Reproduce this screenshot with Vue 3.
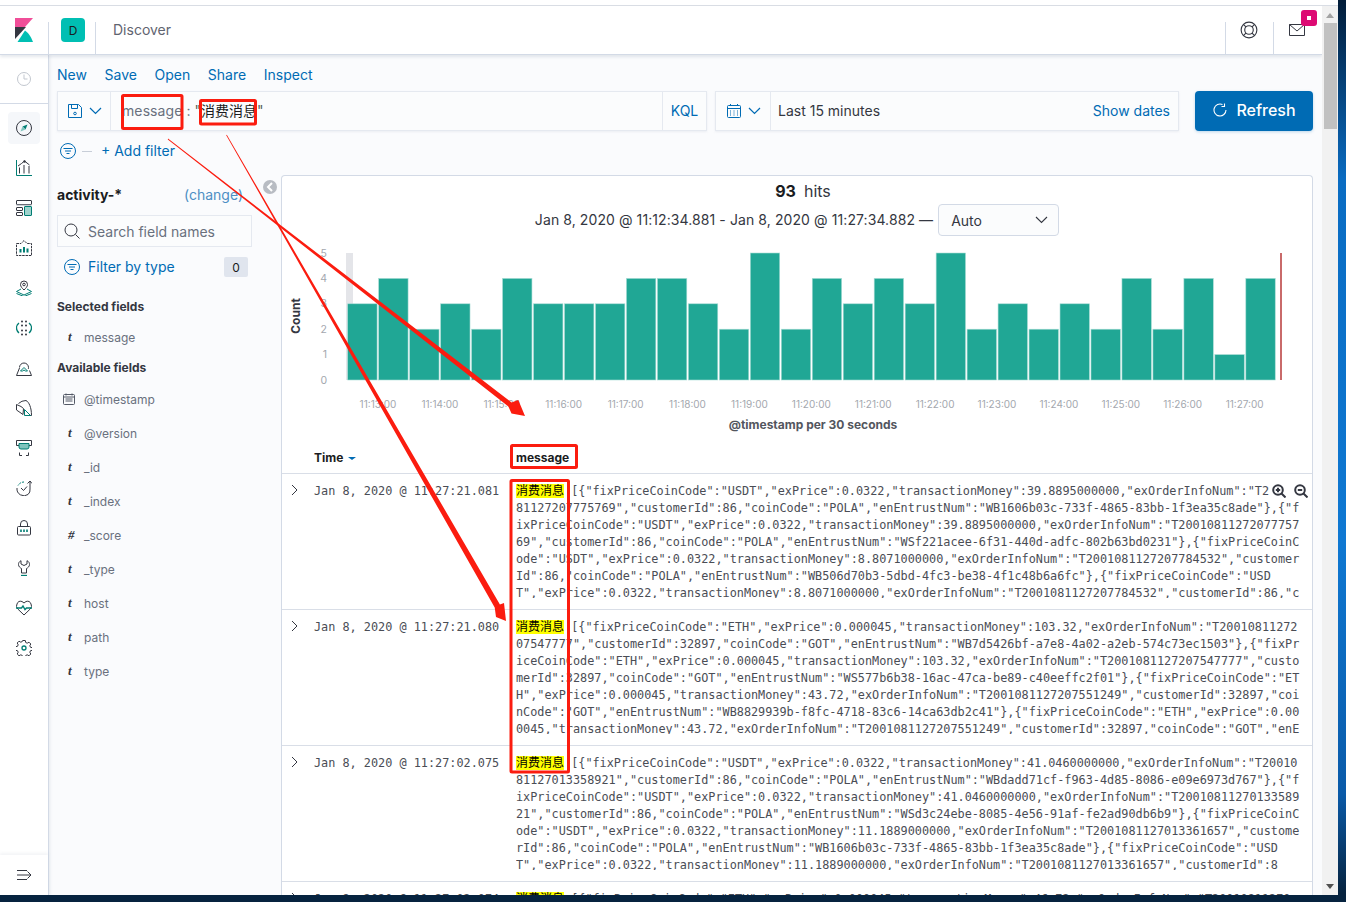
<script setup>
const bars = [3,4,2,3,2,4,3,3,3,4,4,3,2,5,2,4,3,4,3,5,2,3,2,3,2,4,2,4,1,4].map((v, i) => ({
  x: 347.7 + 30.97 * i,
  y: 380 - v * 25.4,
  h: v * 25.4
}))
const yTicks = [0, 1, 2, 3, 4, 5].map(v => ({ v, y: 383.5 - v * 25.4 }))
const xTicks = ['11:13:00','11:14:00','11:15:00','11:16:00','11:17:00','11:18:00','11:19:00','11:20:00','11:21:00','11:22:00','11:23:00','11:24:00','11:25:00','11:26:00','11:27:00']
  .map((t, i) => ({ t, x: 378 + 61.9 * i }))
const navLinks = ['New', 'Save', 'Open', 'Share', 'Inspect']
const fields = [
  { t: 'cal', n: '@timestamp' }, { t: 't', n: '@version' }, { t: 't', n: '_id' },
  { t: 't', n: '_index' }, { t: '#', n: '_score' }, { t: 't', n: '_type' },
  { t: 't', n: 'host' }, { t: 't', n: 'path' }, { t: 't', n: 'type' }
]
const rows = [
  { time: 'Jan 8, 2020 @ 11:27:21.081', hover: true, text: ' [{"fixPriceCoinCode":"USDT","exPrice":0.0322,"transactionMoney":39.8895000000,"exOrderInfoNum":"T2\n81127207775769","customerId":86,"coinCode":"POLA","enEntrustNum":"WB1606b03c-733f-4865-83bb-1f3ea35c8ade"},{"f\nixPriceCoinCode":"USDT","exPrice":0.0322,"transactionMoney":39.8895000000,"exOrderInfoNum":"T20010811272077757\n69","customerId":86,"coinCode":"POLA","enEntrustNum":"WSf221acee-6f31-440d-adfc-802b63bd0231"},{"fixPriceCoinC\node":"USDT","exPrice":0.0322,"transactionMoney":8.8071000000,"exOrderInfoNum":"T2001081127207784532","customer\nId":86,"coinCode":"POLA","enEntrustNum":"WB506d70b3-5dbd-4fc3-be38-4f1c48b6a6fc"},{"fixPriceCoinCode":"USD\nT","exPrice":0.0322,"transactionMoney":8.8071000000,"exOrderInfoNum":"T2001081127207784532","customerId":86,"c' },
  { time: 'Jan 8, 2020 @ 11:27:21.080', text: ' [{"fixPriceCoinCode":"ETH","exPrice":0.000045,"transactionMoney":103.32,"exOrderInfoNum":"T20010811272\n07547777","customerId":32897,"coinCode":"GOT","enEntrustNum":"WB7d5426bf-a7e8-4a02-a2eb-574c73ec1503"},{"fixPr\niceCoinCode":"ETH","exPrice":0.000045,"transactionMoney":103.32,"exOrderInfoNum":"T2001081127207547777","custo\nmerId":32897,"coinCode":"GOT","enEntrustNum":"WS577b6b38-16ac-47ca-be89-c40eeffc2f01"},{"fixPriceCoinCode":"ET\nH","exPrice":0.000045,"transactionMoney":43.72,"exOrderInfoNum":"T2001081127207551249","customerId":32897,"coi\nnCode":"GOT","enEntrustNum":"WB8829939b-f8fc-4718-83c6-14ca63db2c41"},{"fixPriceCoinCode":"ETH","exPrice":0.00\n0045,"transactionMoney":43.72,"exOrderInfoNum":"T2001081127207551249","customerId":32897,"coinCode":"GOT","enE' },
  { time: 'Jan 8, 2020 @ 11:27:02.075', text: ' [{"fixPriceCoinCode":"USDT","exPrice":0.0322,"transactionMoney":41.0460000000,"exOrderInfoNum":"T20010\n81127013358921","customerId":86,"coinCode":"POLA","enEntrustNum":"WBdadd71cf-f963-4d85-8086-e09e6973d767"},{"f\nixPriceCoinCode":"USDT","exPrice":0.0322,"transactionMoney":41.0460000000,"exOrderInfoNum":"T20010811270133589\n21","customerId":86,"coinCode":"POLA","enEntrustNum":"WSd3c24ebe-8085-4e56-91af-fe2ad90db6b9"},{"fixPriceCoinC\node":"USDT","exPrice":0.0322,"transactionMoney":11.1889000000,"exOrderInfoNum":"T2001081127013361657","custome\nrId":86,"coinCode":"POLA","enEntrustNum":"WB1606b03c-733f-4865-83bb-1f3ea35c8ade"},{"fixPriceCoinCode":"USD\nT","exPrice":0.0322,"transactionMoney":11.1889000000,"exOrderInfoNum":"T2001081127013361657","customerId":8' },
  { time: 'Jan 8, 2020 @ 11:27:02.074', text: ' [{"fixPriceCoinCode":"ETH","exPrice":0.000045,"transactionMoney":46.72,"exOrderInfoNum":"T20010811270' }
]
</script>

<template>
  <div class="desk">
    <div class="win">
      <div class="strip"></div>
      <div class="body">
        <div class="page">
          <header class="head">
            <div class="logo">
              <svg width="18" height="24" viewBox="0 0 18 24"><path d="M0 0H18L10 9H0Z" fill="#f04e98"/><path d="M0 9H11L0 21Z" fill="#343741"/><path d="M2.500 24L10 12.500Q15.500 16.500 18 24Z" fill="#00bfb3"/></svg>
            </div>
            <div class="space"><span class="avatar">D</span></div>
            <div class="crumb">Discover</div>
            <div class="hbtn">
              <svg width="18" height="18" viewBox="0 0 16 16" fill="none" stroke="#343741"><circle cx="8" cy="8" r="7"/><circle cx="8" cy="8" r="3.800"/><path d="M3 3l2.300 2.300M13 3l-2.300 2.300M3 13l2.300-2.300M13 13l-2.300-2.300"/></svg>
            </div>
            <div class="hbtn">
              <svg width="16" height="12" viewBox="0 0 16 12" fill="none" stroke="#343741"><path d="M.5.5h15v11H.5zM.5.5L8 7l7.500-6.500"/></svg>
              <span class="badge"><i></i></span>
            </div>
          </header>
          <div class="under">
            <nav class="rail">
              <div class="recent">
                <svg width="16" height="16" viewBox="0 0 16 16" fill="none" stroke="#c2c7cf"><circle cx="8" cy="8" r="6.500"/><path d="M8 3.500V8h3.500"/></svg>
              </div>
              <div class="apps">
                <div class="app on"><svg width="16" height="16" viewBox="0 0 16 16" fill="none" stroke="#343741"><circle cx="8" cy="8" r="7.500"/><path d="M11.500 4.500L9.500 9.500 6.500 6.500z" fill="#017d73" stroke="none"/><path d="M4.500 11.500L9.500 9.500 6.500 6.500z" fill="#7fc4bd" stroke="none"/></svg></div>
                <div class="app"><svg width="16" height="16" viewBox="0 0 16 16" fill="none"><path d="M.5 0v15.500H16" stroke="#017d73"/><path d="M3.500 13.500V7.500M8 13.500V5M13 13.500V6" stroke="#343741"/><path d="M2 6l3.500-2.500L8.500 1l5 4" stroke="#343741"/><circle cx="8.500" cy="1.500" r="1.200" fill="#343741"/></svg></div>
                <div class="app"><svg width="16" height="16" viewBox="0 0 16 16" fill="none" stroke="#343741"><rect x=".5" y=".5" width="15" height="4" rx=".5"/><path d="M.5 5h15" stroke="#9aa0aa"/><rect x=".5" y="7.500" width="6" height="3" rx=".5"/><rect x=".5" y="12.500" width="6" height="3" rx=".5"/><rect x="8.500" y="6.500" width="7" height="9" rx=".5" stroke="#017d73" fill="#9fd3cd"/></svg></div>
                <div class="app"><svg width="16" height="16" viewBox="0 0 16 16" fill="none" stroke="#343741"><path d="M.5 3.500H5L8 .5l3 3h4.500v12H.5z" stroke-dasharray="2.500 .8"/><path d="M4.500 12.500V9M8 12.500V7M11.500 12.500V8.500" stroke="#017d73" stroke-width="2"/></svg></div>
                <div class="app"><svg width="16" height="16" viewBox="0 0 16 16" fill="none" stroke="#343741"><path d="M8 10C6 8 4.500 6.500 4.500 4.500a3.500 3.500 0 017 0C11.500 6.500 10 8 8 10z"/><circle cx="8" cy="4.500" r="1.300"/><path d="M5 9L.5 11.500 8 15l7.500-3.500L11 9M.5 13.500L8 16.500l7.500-3" stroke="#017d73"/></svg></div>
                <div class="app"><svg width="16" height="16" viewBox="0 0 16 16" fill="#343741"><circle cx="6" cy="1.500" r="1"/><circle cx="10" cy="1.500" r="1"/><circle cx="6" cy="5.500" r="1"/><circle cx="10" cy="5.500" r="1"/><circle cx="6" cy="10.500" r="1"/><circle cx="10" cy="10.500" r="1"/><circle cx="6" cy="14.500" r="1"/><circle cx="10" cy="14.500" r="1"/><path d="M3 3Q.5 5 .5 8T3 13M13 3q2.500 2 2.500 5T13 13" fill="none" stroke="#017d73" stroke-width="1.300"/></svg></div>
                <div class="app"><svg width="16" height="16" viewBox="0 0 16 16" fill="none" stroke="#343741"><path d="M3.500 7.500a4.500 4.500 0 119 0c0 .5 0 1-.2 1.500"/><path d="M3.500 8L.5 15.500h15l-2-5"/><path d="M4.500 11L8 7.500l3.500 3.500H9.500L8 10l-1.500 1z" stroke="#017d73"/></svg></div>
                <div class="app"><svg width="16" height="16" viewBox="0 0 16 16" fill="none" stroke="#343741"><path d="M7 14.500L.5 10V4.500L5 6.500l2.500 2zM2.500 3.500A11 11 0 0110 .5c3 1.500 5.500 7 5.500 15H9.500"/><path d="M8.500 15.500V9.500l6 6z" stroke="#017d73"/></svg></div>
                <div class="app"><svg width="16" height="16" viewBox="0 0 16 16" fill="none" stroke="#343741"><path d="M3 5.500H.5V.5h15v5H13"/><path d="M3 3.500h10V7a2 2 0 01-2 2H5a2 2 0 01-2-2z" fill="#7fc4bd" stroke="#017d73"/><path d="M6 15.500H3.500v-3M10 15.500h2.500v-3"/></svg></div>
                <div class="app"><svg width="16" height="16" viewBox="0 0 16 16" fill="none" stroke="#343741"><path d="M8 2a7 7 0 00-6 3.500" stroke="#017d73" stroke-dasharray="2 1"/><path d="M1 8a7 7 0 0011 6.500A6 6 0 0014 9V1M11.500 3.500L14 1l2 2.500"/><path d="M5 8l2.500 2.500L11 6.500"/></svg></div>
                <div class="app"><svg width="16" height="16" viewBox="0 0 16 16" fill="none" stroke="#343741"><path d="M4.500 6V4a3.500 3.500 0 017 0v2"/><rect x="1.500" y="6.500" width="13" height="8.500" rx="1"/><path d="M5 9.500v2.500M8 9.500v2.500M11 9.500v2.500" stroke="#017d73" stroke-width="1.600"/></svg></div>
                <div class="app"><svg width="16" height="16" viewBox="0 0 16 16" fill="none" stroke="#343741"><path d="M5 .7C3 1.700 2.500 3 2.500 4.500 2.500 6.500 4 7.700 5.500 8.500v4.500h5V8.500C12 7.700 13.500 6.500 13.500 4.500 13.500 3 13 1.700 11 .7V4L8 5.500 5 4z"/><path d="M5 15.500h6" stroke="#017d73" stroke-width="1.300"/></svg></div>
                <div class="app"><svg width="16" height="16" viewBox="0 0 16 16" fill="none" stroke="#343741"><path d="M8 15L1.800 9A4 4 0 011 4a4 4 0 015-2.500L8 3l2-1.500A4 4 0 0115 4a4 4 0 01-.8 5z"/><path d="M0 8h5.500l1.500-2 2 3.500 1.500-1.500H16" stroke="#017d73" stroke-width="1.400"/></svg></div>
                <div class="app"><svg width="16" height="16" viewBox="0 0 16 16" fill="none" stroke="#343741"><path d="M6.700.5h2.600l.4 2 1.500.7 1.800-1 1.800 1.800-1 1.800.7 1.500 2 .4v2.600l-2 .4-.7 1.500 1 1.800-1.800 1.800-1.800-1-1.500.7-.4 2H6.700l-.4-2-1.500-.7-1.800 1-1.800-1.800 1-1.800-.7-1.500-2-.4V6.700l2-.4.7-1.500-1-1.800 1.800-1.800 1.800 1 1.500-.7z"/><circle cx="8" cy="8" r="2" stroke="#017d73" stroke-width="1.300"/></svg></div>
              </div>
              <div class="toggle">
                <svg width="16" height="12" viewBox="0 0 16 12" fill="none" stroke="#343741"><path d="M1 1.500h10M1 6h14M1 10.500h10M11.500 2.500L15 6l-3.500 3.500"/></svg>
              </div>
            </nav>
            <main class="main">
              <div class="links"><a v-for="l in navLinks" :key="l">{{ l }}</a></div>
              <div class="bars">
                <div class="query">
                  <div class="qsave">
                    <svg width="14" height="14" viewBox="0 0 14 14" fill="none" stroke="#006bb4"><path d="M.5.5h10l3 3v10H.5zM3.500.5v4h6v-4"/><circle cx="7" cy="9.500" r="1.300"/></svg>
                    <svg width="13" height="8" viewBox="0 0 13 8" fill="none" stroke="#006bb4" stroke-width="1.200"><path d="M1 1l5.500 5.500L12 1"/></svg>
                  </div>
                  <div class="qinput"><span class="qk">message</span><span class="qp"> : </span><span class="qq">"</span><span class="qv">消费消息</span><span class="qq">"</span></div>
                  <div class="kql">KQL</div>
                </div>
                <div class="date">
                  <div class="dcal">
                    <svg width="16" height="16" viewBox="0 0 16 16" fill="none" stroke="#006bb4"><rect x="1.500" y="2.500" width="13" height="12" rx="1"/><path d="M1.500 5.500h13M4.500 1v2M11.500 1v2M4 8h1M7.500 8h1M11 8h1M4 10h1M7.500 10h1M11 10h1M4 12h1M7.500 12h1M11 12h1"/></svg>
                    <svg width="13" height="8" viewBox="0 0 13 8" fill="none" stroke="#006bb4" stroke-width="1.200"><path d="M1 1l5.500 5.500L12 1"/></svg>
                  </div>
                  <div class="dtext">Last 15 minutes</div>
                  <div class="dshow">Show dates</div>
                </div>
                <button class="refresh">
                  <svg width="14" height="14" viewBox="0 0 14 14" fill="none" stroke="#fff" stroke-width="1.100"><path d="M9.500 1.500A6 6 0 1013 7M11.500.5v3h-3"/></svg>
                  Refresh
                </button>
              </div>
              <div class="filters">
                <svg width="16" height="16" viewBox="0 0 16 16" fill="none" stroke="#006bb4"><circle cx="8" cy="8" r="7.500"/><path d="M3.500 5.500h9M5 8h6M6.500 10.500h3"/></svg>
                <span class="dash"></span>
                <a class="add">+ Add filter</a>
              </div>
              <div class="content">
                <aside class="side">
                  <div class="idx"><b>activity-*</b><a>(change)</a></div>
                  <div class="search">
                    <svg width="16" height="16" viewBox="0 0 16 16" fill="none" stroke="#343741"><circle cx="7" cy="7" r="6"/><path d="M11.500 11.500L15.500 15.500"/></svg>
                    <span>Search field names</span>
                  </div>
                  <div class="ftype">
                    <svg width="16" height="16" viewBox="0 0 16 16" fill="none" stroke="#006bb4"><circle cx="8" cy="8" r="7.500"/><path d="M3.500 5.500h9M5 8h6M6.500 10.500h3"/></svg>
                    <span>Filter by type</span>
                    <em>0</em>
                  </div>
                  <h3 class="sel">Selected fields</h3>
                  <div class="field first"><span class="ti">t</span><span>message</span></div>
                  <h3 class="avail">Available fields</h3>
                  <div v-for="f in fields" :key="f.n" class="field">
                    <svg v-if="f.t === 'cal'" class="calic" width="12" height="12" viewBox="0 0 12 12" fill="none" stroke="#535966"><rect x=".5" y="1.500" width="11" height="10" rx="1"/><path d="M.5 4h11M3 .5v2M9 .5v2M2.500 6h7M2.500 8h7" /></svg>
                    <span v-else class="ti">{{ f.t }}</span>
                    <span>{{ f.n }}</span>
                  </div>
                  <span class="collapse">
                    <svg width="8" height="10" viewBox="0 0 8 10" fill="none" stroke="#fff" stroke-width="2"><path d="M6 1L2 5l4 4"/></svg>
                  </span>
                </aside>
                <section class="card">
                  <div class="hits"><b>93</b><span>hits</span></div>
                  <div class="range">
                    <span class="rtext">Jan 8, 2020 @ 11:12:34.881 - Jan 8, 2020 @ 11:27:34.882 —</span>
                    <div class="auto">
                      <span>Auto</span>
                      <svg width="13" height="8" viewBox="0 0 13 8" fill="none" stroke="#343741" stroke-width="1.100"><path d="M1 1l5.500 5.500L12 1"/></svg>
                    </div>
                  </div>
                  <svg class="chart" width="1030" height="203" viewBox="282 240 1030 203">
                    <rect x="346" y="253" width="7" height="127" fill="#e4e5e9"/>
                    <rect v-for="(b, i) in bars" :key="i" :x="b.x" :y="b.y" width="29.400" :height="b.h" fill="#20a795" stroke="#a9dcd5" stroke-width=".6"/>
                    <rect x="1280" y="253" width="2" height="127" fill="#c96a6a"/>
                    <text v-for="t in yTicks" :key="t.v" :x="327" :y="t.y" class="ty" text-anchor="end">{{ t.v }}</text>
                    <text v-for="t in xTicks" :key="t.t" :x="t.x" y="408" class="tx" text-anchor="middle">{{ t.t }}</text>
                    <text class="at" transform="translate(300 316) rotate(-90)" text-anchor="middle">Count</text>
                    <text class="at2" x="813" y="429" text-anchor="middle">@timestamp per 30 seconds</text>
                  </svg>
                  <div class="thead">
                    <span class="tht">Time<i></i></span>
                    <span class="thm">message</span>
                  </div>
                  <div v-for="r in rows" :key="r.time" class="row">
                    <svg class="chev" width="7" height="12" viewBox="0 0 7 12" fill="none" stroke="#343741"><path d="M1 1l5 5-5 5"/></svg>
                    <div class="time">{{ r.time }}</div>
                    <div class="src"><mark>消费消息</mark>{{ r.text }}</div>
                    <div v-if="r.hover" class="zoomers">
                      <svg width="14" height="14" viewBox="0 0 14 14" fill="none" stroke="#343741" stroke-width="2"><circle cx="6" cy="6" r="4.800"/><path d="M9.500 9.500l4 4M3.800 6h4.400M6 3.800v4.400" /></svg>
                      <svg width="14" height="14" viewBox="0 0 14 14" fill="none" stroke="#343741" stroke-width="2"><circle cx="6" cy="6" r="4.800"/><path d="M9.500 9.500l4 4M3.800 6h4.400"/></svg>
                    </div>
                  </div>
                </section>
              </div>
            </main>
          </div>
        </div>
        <div class="scroll">
          <span class="up"></span>
          <span class="thumb"></span>
          <span class="down"></span>
        </div>
      </div>
    </div>
    <svg class="marks" width="1346" height="902" viewBox="0 0 1346 902">
      <g fill="none" stroke="#fb1c0f" stroke-width="3">
        <rect x="122.500" y="95.500" width="59.500" height="33" rx="1"/>
        <rect x="200.500" y="100.500" width="55" height="23.500" rx="1"/>
        <rect x="511.500" y="445.500" width="65" height="22" rx="1"/>
        <rect x="511" y="480.500" width="57.500" height="291.500" rx="1"/>
      </g>
      <g fill="#fb1c0f">
        <polygon points="168,138.600 167.800,139.400 508.400,406.500 511.500,413.500 525,416 518.300,400 511.600,402.400"/>
        <polygon points="226.200,135.200 226.800,134.800 499.900,604.500 504,603 506,621 496,617 494.700,607.500"/>
      </g>
    </svg>
  </div>
</template>

<style>
html, body { margin: 0; padding: 0; overflow: hidden; }
</style>

<style scoped>
.desk { position: relative; width: 1346px; height: 902px; overflow: hidden; background: linear-gradient(180deg, #021c38 0, #0a6cc2 20%, #0f78d2 60%, #0a5aa8 88%, #06233f 99%); font-family: Inter, "Noto Sans CJK SC", sans-serif; font-size: 14px; color: #343741; }
.win { width: 1338px; height: 895px; display: flex; flex-direction: column; overflow: hidden; background: #fff; }
.strip { height: 6px; flex: none; box-sizing: border-box; background: #fff; border-bottom: 1px solid #d9dde4; }
.body { flex: 1; min-height: 0; display: flex; }
.page { flex: 1; min-width: 0; display: flex; flex-direction: column; overflow: hidden; }
.scroll { width: 16px; flex: none; background: #f1f1f1; display: flex; flex-direction: column; align-items: center; }
.up { margin-top: 7px; border: 4px solid transparent; border-top: 0; border-bottom: 5px solid #a3a3a3; }
.thumb { margin-top: 5px; width: 13px; height: 106px; background: #c1c1c1; }
.down { margin-top: auto; margin-bottom: 6px; border: 4px solid transparent; border-bottom: 0; border-top: 5px solid #505050; }

.head { height: 49px; flex: none; display: flex; align-items: stretch; background: #fff; border-bottom: 1px solid #d3dae6; box-shadow: 0 2px 3px rgba(152,162,179,.25); position: relative; z-index: 2; box-sizing: border-box; }
.logo { width: 48px; flex: none; display: flex; align-items: center; justify-content: center; position: relative; }
.logo::after { content: ""; position: absolute; right: -1px; top: 16px; bottom: 0; width: 1px; background: #d3dae6; }
.space { width: 48px; flex: none; display: flex; align-items: center; justify-content: center; position: relative; padding-left: 2px; box-sizing: border-box; }
.space::after { content: ""; position: absolute; right: 0; top: 16px; bottom: 0; width: 1px; background: #d3dae6; }
.avatar { width: 24px; height: 24px; border-radius: 4px; background: #00bfb3; color: #1a1c21; font-size: 12px; display: flex; align-items: center; justify-content: center; }
.crumb { flex: 1; padding: 0 0 2px 17px; display: flex; align-items: center; color: #5f6470; }
.hbtn { width: 48px; flex: none; display: flex; align-items: center; justify-content: center; position: relative; }
.hbtn::before { content: ""; position: absolute; left: 0; top: 16px; bottom: 0; width: 1px; background: #d3dae6; }
.hbtn:last-of-type { margin-right: 1px; }
.badge { position: absolute; left: 28px; top: 4px; width: 16px; height: 16px; border-radius: 3px; background: #dd0a73; display: flex; align-items: center; justify-content: center; }
.badge i { width: 4px; height: 4px; background: #fff; }

.under { flex: 1; min-height: 0; display: flex; }
.rail { width: 48px; flex: none; background: #fff; border-right: 1px solid #d3dae6; box-shadow: 1px 0 3px rgba(152,162,179,.2); display: flex; flex-direction: column; position: relative; z-index: 1; }
.recent { height: 49px; box-sizing: border-box; flex: none; display: flex; align-items: center; justify-content: center; border-bottom: 1px solid #d3dae6; padding-bottom: 1px; }
.apps { flex: 1; padding-top: 8px; display: flex; flex-direction: column; align-items: center; }
.app { width: 32px; height: 32px; margin-bottom: 8px; border-radius: 4px; display: flex; align-items: center; justify-content: center; }
.app.on { background: #f5f7fa; }
.toggle { height: 40px; flex: none; display: flex; align-items: center; justify-content: center; box-shadow: 0 -2px 3px rgba(152,162,179,.12); }

.main { flex: 1; min-width: 0; background: #fafbfd; padding: 0 9px 0 8px; display: flex; flex-direction: column; }
.links { height: 36px; flex: none; display: flex; align-items: center; gap: 17.600px; padding-top: 4px; padding-bottom: 1px; box-sizing: border-box; color: #006bb4; }
.bars { height: 40px; flex: none; display: flex; gap: 8px; }
.query { width: 650px; box-sizing: border-box; flex: none; display: flex; background: #fbfcfd; border: 1px solid #e5e9f0; box-shadow: 0 1px 2px rgba(152,162,179,.15); }
.qsave { width: 53px; box-sizing: border-box; flex: none; display: flex; align-items: center; justify-content: center; gap: 7px; border-right: 1px solid #e5e9f0; padding-left: 1px; }
.qinput { flex: 1; padding-left: 11px; line-height: 38px; white-space: pre; }
.qk { color: #69707d; letter-spacing: .1px; }
.qp { color: #69707d; }
.qq { color: #55605a; }
.qv { color: #1a1c21; }
.kql { width: 44px; box-sizing: border-box; flex: none; border-left: 1px solid #e5e9f0; display: flex; align-items: center; justify-content: center; color: #006bb4; padding-bottom: 1px; }
.date { width: 464px; box-sizing: border-box; flex: none; display: flex; align-items: center; background: #fbfcfd; border: 1px solid #e5e9f0; box-shadow: 0 1px 2px rgba(152,162,179,.15); }
.dcal { width: 55px; height: 100%; box-sizing: border-box; flex: none; display: flex; align-items: center; justify-content: center; gap: 6px; border-right: 1px solid #e5e9f0; }
.dtext { flex: 1; padding-left: 7px; padding-bottom: 2px; color: #343741; }
.dshow { padding-right: 8px; padding-bottom: 2px; color: #006bb4; }
.refresh { width: 118px; margin-left: 8px; flex: none; border: 0; border-radius: 4px; background: #006bb4; color: #fff; font: 500 16px Inter, sans-serif; display: flex; align-items: center; justify-content: center; gap: 9px; padding: 0 0 2px 1px; box-shadow: 0 1px 3px rgba(0,107,180,.25); }
.filters { height: 40px; margin-bottom: 4px; flex: none; display: flex; align-items: center; padding-left: 3px; }
.dash { width: 10px; height: 1px; background: #c8ced8; margin-left: 6px; }
.add { margin-left: 9px; color: #006bb4; padding-bottom: 2px; }

.content { flex: 1; min-height: 0; display: flex; }
.side { width: 195px; flex: none; margin-right: 29px; position: relative; }
.idx { height: 20px; margin-top: 9px; margin-bottom: 1px; display: flex; align-items: center; justify-content: space-between; }
.idx b { font-weight: 700; color: #1a1c21; }
.idx a { color: #4d8fc4; margin-right: 9px; }
.search { margin-top: 11px; height: 32px; box-sizing: border-box; display: flex; align-items: center; gap: 8px; padding: 0 0 0 6px; background: #fbfcfd; border: 1px solid #e5e9f0; color: #69707d; }
.ftype { margin-top: 10px; height: 20px; display: flex; align-items: center; gap: 8px; padding-left: 7px; color: #006bb4; }
.ftype span { margin-top: -1px; }
.ftype em { margin-left: auto; margin-right: 4px; width: 24px; height: 20px; background: #e0e5ee; border-radius: 2px; color: #1a1c21; font-style: normal; font-size: 12px; display: flex; align-items: center; justify-content: center; }
h3 { margin: 0; font-size: 12px; line-height: 16px; font-weight: 700; color: #343741; }
.sel { margin-top: 22px; }
.avail { margin-top: 5px; margin-bottom: 7px; }
.field { height: 34px; display: flex; align-items: center; font-size: 12px; color: #69707d; padding: 0 0 2px 6px; box-sizing: border-box; }
.field.first { margin-top: 6px; }
.ti { width: 21px; padding-left: 5px; box-sizing: border-box; flex: none; font: italic 700 13px "Liberation Serif", serif; color: #343741; }
.calic { width: 12px; margin-right: 9px; flex: none; }
.collapse { position: absolute; left: 206px; top: 5px; width: 14px; height: 14px; border-radius: 50%; background: #b8bcc3; display: flex; align-items: center; justify-content: center; }

.card { flex: 1; min-width: 0; background: #fff; border: 1px solid #d3dae6; border-bottom: 0; border-radius: 4px 4px 0 0; box-sizing: border-box; }
.hits { margin-top: 5px; height: 20px; display: flex; justify-content: center; align-items: center; gap: 8px; font-size: 16px; padding-left: 12px; padding-bottom: 1px; }
.hits b { font-weight: 700; color: #1a1c21; }
.hits span { color: #343741; }
.range { margin-top: 2px; height: 32px; display: flex; align-items: center; justify-content: center; gap: 5px; color: #343741; }
.rtext { letter-spacing: .09px; margin-top: -2px; }
.auto { width: 121px; height: 32px; box-sizing: border-box; background: #fbfcfd; border: 1px solid #d3dae6; border-radius: 4px; display: flex; align-items: center; justify-content: space-between; padding: 0 10px 0 12px; }
.chart { display: block; margin-top: 4px; }
.ty, .tx { font-size: 10.500px; fill: #a3a7ae; font-family: Inter, sans-serif; }
.tx { font-size: 10px; }
.at { font-size: 12px; font-weight: 700; fill: #343741; font-family: Inter, sans-serif; }
.at2 { font-size: 12px; font-weight: 700; fill: #53565e; font-family: Inter, sans-serif; }
.thead { height: 30px; position: relative; display: flex; align-items: center; font-size: 12px; font-weight: 700; color: #1a1c21; padding-bottom: 2px; box-sizing: border-box; }
.tht { margin-left: 32px; width: 202px; display: flex; align-items: center; }
.tht i { margin-left: 5px; margin-top: 3px; border: 4px solid transparent; border-bottom: 0; border-top: 3px solid #006bb4; }
.row { height: 136px; box-sizing: border-box; border-top: 1px solid #d9dee7; display: flex; position: relative; font: 11.840px "DejaVu Sans Mono", "Noto Sans CJK SC", monospace; line-height: 17px; color: #4a4d55; overflow: hidden; }
.chev { position: absolute; left: 9px; top: 10px; }
.time { margin-left: 32px; width: 202px; flex: none; padding-top: 9px; height: 17px; }
.src { margin-top: 9px; height: 115px; overflow: hidden; white-space: pre; flex: 1; min-width: 0; }
mark { background: #ffff00; color: #000; font-size: 12px; }
.zoomers { position: absolute; left: 990px; top: 10px; display: flex; gap: 8px; background: #fff; }
.marks { position: absolute; left: 0; top: 0; pointer-events: none; }
</style>
